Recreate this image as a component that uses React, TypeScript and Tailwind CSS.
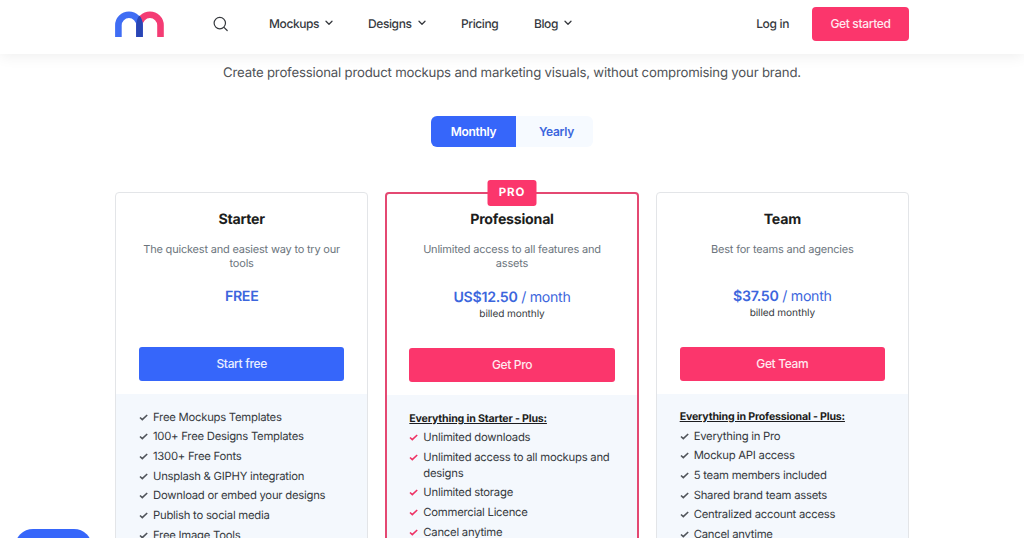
import clsx from "clsx";

type Plan = {
  name: string;
  tagline: string;
  price: string;
  period?: string;
  billing?: string;
  cta: string;
  heading?: string;
  features: string[];
  highlighted?: boolean;
};

const NAV = [
  { label: "Mockups", menu: true, className: "w-[99px]" },
  { label: "Designs", menu: true, className: "w-[93px]" },
  { label: "Pricing", menu: false, className: "w-[73px]" },
  { label: "Blog", menu: true, className: "" },
];

const PLANS: Plan[] = [
  {
    name: "Starter",
    tagline: "The quickest and easiest way to try our tools",
    price: "FREE",
    cta: "Start free",
    features: [
      "Free Mockups Templates",
      "100+ Free Designs Templates",
      "1300+ Free Fonts",
      "Unsplash & GIPHY integration",
      "Download or embed your designs",
      "Publish to social media",
      "Free Image Tools",
    ],
  },
  {
    name: "Professional",
    tagline: "Unlimited access to all features and assets",
    price: "US$12.50",
    period: "/ month",
    billing: "billed monthly",
    cta: "Get Pro",
    heading: "Everything in Starter - Plus:",
    features: [
      "Unlimited downloads",
      "Unlimited access to all mockups and designs",
      "Unlimited storage",
      "Commercial Licence",
      "Cancel anytime",
    ],
    highlighted: true,
  },
  {
    name: "Team",
    tagline: "Best for teams and agencies",
    price: "$37.50",
    period: "/ month",
    billing: "billed monthly",
    cta: "Get Team",
    heading: "Everything in Professional - Plus:",
    features: [
      "Everything in Pro",
      "Mockup API access",
      "5 team members included",
      "Shared brand team assets",
      "Centralized account access",
      "Cancel anytime",
    ],
  },
];

export default function App() {
  return (
    <div className="relative h-[538px] overflow-hidden bg-white font-['Inter',sans-serif] text-[#36393e] [text-rendering:geometricPrecision]">
      <Header />
      <main className="mx-auto w-[794px]">
        <p className="pt-[10px] text-center text-[13.2px] leading-[18px] tracking-[-0.19px] text-[#505357]">
          Create professional product mockups and marketing visuals, without
          compromising your brand.
        </p>
        <BillingToggle />
        <div className="mt-[45px] grid grid-cols-3 gap-[17px]">
          {PLANS.map((plan) => (
            <PlanCard key={plan.name} plan={plan} />
          ))}
        </div>
      </main>

      {/* Chat launcher */}
      <button className="absolute top-[529px] left-[15px] h-9 w-[77px] rounded-full bg-[#3666fa]" />
    </div>
  );
}

function Header() {
  return (
    <header className="relative h-[54px] bg-white shadow-[0_2px_14px_rgba(0,0,0,0.07)]">
      <div className="mx-auto flex h-[47px] w-[794px] items-center">
        <Logo />
        <SearchIcon />
        <nav className="ml-[40px] flex text-[12px] font-medium tracking-[-0.4px]">
          {NAV.map((item) => (
            <a key={item.label} className={clsx("flex items-center", item.className)}>
              {item.label}
              {item.menu && <Chevron />}
            </a>
          ))}
        </nav>
        <a className="ml-auto text-[12px] font-medium tracking-[-0.35px]">Log in</a>
        <button className="ml-[23px] h-[34px] w-[97px] rounded bg-[#fb366c] text-[12px] font-medium tracking-[-0.35px] text-[#ffe9ef]">
          Get started
        </button>
      </div>
    </header>
  );
}

function BillingToggle() {
  return (
    <div className="mx-auto mt-[34px] flex h-[31px] w-[162px] overflow-hidden rounded-md bg-[#f6faff] text-[12px] font-semibold tracking-[-0.3px]">
      <button className="w-[85px] bg-[#3666fa] text-white">Monthly</button>
      <button className="flex-1 pl-1 text-[#3c66dd]">Yearly</button>
    </div>
  );
}

function PlanCard({ plan }: { plan: Plan }) {
  const pro = plan.highlighted;

  return (
    <section
      className={clsx(
        "relative flex h-[400px] flex-col rounded",
        pro ? "border-2 border-[#e44872]" : "border border-[#e3e5e8]"
      )}
    >
      {pro && (
        <span className="absolute -top-[14px] left-1/2 flex h-[26px] w-[49px] -translate-x-1/2 items-center justify-center rounded-[3px] bg-[#fb366c] text-[11.5px] font-bold tracking-[0.8px] text-white">
          PRO
        </span>
      )}
      <div
        className={clsx(
          "flex h-[201px] flex-col text-center",
          pro ? "px-[22px] pt-[17px]" : "px-[23px] pt-[18px]"
        )}
      >
        <h2 className="text-[14.2px] leading-[18px] font-bold tracking-[-0.25px] text-[#1c1d20]">
          {plan.name}
        </h2>
        <p className="mt-[13px] h-[29px] text-[11px] leading-[14px] tracking-[-0.2px] text-[#6c757d]">
          {plan.tagline}
        </p>
        <p
          className={clsx(
            "text-[14.2px] leading-[20px] tracking-[-0.3px] text-[#3c66dd]",
            pro ? "mt-[17px]" : "mt-[16px]"
          )}
        >
          <span className="font-semibold">{plan.price}</span>
          {plan.period && <span> {plan.period}</span>}
        </p>
        <p className="-mt-px h-[14px] text-[10.1px] leading-[14px] tracking-[-0.1px]">
          {plan.billing}
        </p>
        <button
          className={clsx(
            "mt-[27px] h-[34px] shrink-0 rounded-[3px] text-[12px] font-medium tracking-[-0.35px]",
            plan.cta === "Start free"
              ? "bg-[#3666fa] text-[#e9efff]"
              : "bg-[#fb366c] text-[#ffe9ef]"
          )}
        >
          {plan.cta}
        </button>
      </div>
      <div
        className={clsx(
          "flex-1 bg-[#f4f8fd] text-[11.3px] leading-[15.7px] tracking-[-0.25px] text-[#363a40]",
          pro && "px-[22px] pt-[15.5px]",
          !pro && "px-[23px]",
          !pro && (plan.heading ? "pt-[14.8px]" : "pt-[15.5px]")
        )}
      >
        {plan.heading && (
          <h3 className="mb-1 text-[10.6px] font-bold tracking-[-0.18px] text-[#1c1d20] underline">
            {plan.heading}
          </h3>
        )}
        <ul className="space-y-1">
          {plan.features.map((feature) => (
            <li key={feature} className="flex">
              <Check className={pro ? "text-[#ee3265]" : "text-[#50545a]"} />
              <span>{feature}</span>
            </li>
          ))}
        </ul>
      </div>
    </section>
  );
}

function Logo() {
  return (
    <svg width="49" height="26" viewBox="0 0 49 26" fill="none" className="shrink-0">
      <path d="M24.4 26V14.3a10.55 10.55 0 0 1 21.1 0V26" stroke="#f43c74" strokeWidth="6.6" />
      <path d="M3.4 26V14.3a10.55 10.55 0 0 1 21.1 0V26" stroke="#3f6df4" strokeWidth="6.6" />
      <path
        d="M24.4 4.4c2.2 2.5 3.4 5.9 3.4 9.9V26h-6.6V14.3c0-4 1.1-7.3 3.2-9.9Z"
        fill="#2946b4"
      />
    </svg>
  );
}

function SearchIcon() {
  return (
    <svg
      width="16"
      height="16"
      viewBox="0 0 16 16"
      fill="none"
      stroke="currentColor"
      strokeWidth="1.2"
      strokeLinecap="round"
      className="ml-[49px] shrink-0"
    >
      <circle cx="6.8" cy="7.1" r="5.7" />
      <path d="m11 11.3 3.2 3.2" />
    </svg>
  );
}

function Chevron() {
  return (
    <svg
      width="8"
      height="6"
      viewBox="0 0 8 6"
      fill="none"
      stroke="currentColor"
      strokeWidth="1.3"
      strokeLinecap="round"
      strokeLinejoin="round"
      className="ml-[6px] -mt-0.5"
    >
      <path d="m1 1.2 3 3 3-3" />
    </svg>
  );
}

function Check({ className }: { className: string }) {
  return (
    <svg
      width="9"
      height="9"
      viewBox="0 0 9 9"
      fill="none"
      stroke="currentColor"
      strokeWidth="1.6"
      className={clsx("mt-[3px] mr-[5px] shrink-0", className)}
    >
      <path d="m1 4.5 2.3 2.2L8.2 2" />
    </svg>
  );
}
